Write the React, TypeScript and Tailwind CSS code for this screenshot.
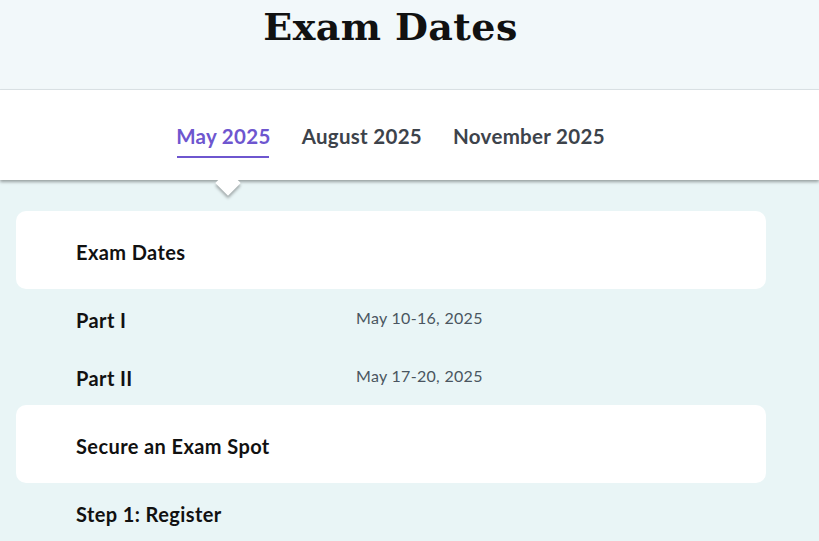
import React from "react";

const body = { fontFamily: "Lato, 'Noto Sans', sans-serif" };

export default function App() {
  return (
    <div className="w-[819px] h-[541px] overflow-hidden bg-[#e9f5f6]" style={body}>
      <div className="h-[90px] bg-[#f2f8fa] border-b border-[#dde4e7] flex justify-center pr-[38px]">
        <h1
          className="text-[38px] font-bold text-[#111] leading-none mt-[8px] tracking-[0.4px]"
          style={{ fontFamily: "'DejaVu Serif', serif" }}
        >
          Exam Dates
        </h1>
      </div>
      <div className="relative h-[90px] bg-white shadow-[0_2px_3px_rgba(0,0,0,0.35)] flex justify-center gap-[31px] pt-[34px] pr-[38px] z-10">
        <div className="flex flex-col items-center">
          <span className="text-[20.5px] font-bold text-[#6e56cf] leading-[24px] tracking-[0.3px]">May 2025</span>
          <div className="w-[92px] h-[2px] bg-[#6e56cf] mt-[8px]" />
        </div>
        <span className="text-[20.5px] font-bold text-[#3d434b] leading-[24px] tracking-[0.3px]">August 2025</span>
        <span className="text-[20.5px] font-bold text-[#3d434b] leading-[24px] tracking-[0.3px]">November 2025</span>
        <div className="absolute left-[219px] top-[84px] w-[18px] h-[18px] bg-white rotate-45 shadow-[2px_2px_3px_rgba(0,0,0,0.3)]" />
        <div className="absolute left-[205px] top-[78px] w-[46px] h-[12px] bg-white" />
      </div>
      <div className="pt-[31px] pl-[16px] w-[766px]">
        <div className="bg-white rounded-[10px] h-[78px] flex items-center pl-[60px]">
          <span className="text-[20px] font-bold text-[#111] tracking-[0.4px] mt-[3px]">Exam Dates</span>
        </div>
        <div className="flex items-center h-[58px] pl-[60px]">
          <span className="w-[280px] text-[20px] font-bold text-[#111] mt-[4px] tracking-[0.4px]">Part I</span>
          <span className="text-[16px] text-[#4a5560] tracking-[0.3px]">May 10-16, 2025</span>
        </div>
        <div className="flex items-center h-[58px] pl-[60px]">
          <span className="w-[280px] text-[20px] font-bold text-[#111] mt-[4px] tracking-[0.4px]">Part II</span>
          <span className="text-[16px] text-[#4a5560] tracking-[0.3px]">May 17-20, 2025</span>
        </div>
        <div className="bg-white rounded-[10px] h-[78px] flex items-center pl-[60px]">
          <span className="text-[20px] font-bold text-[#111] tracking-[0.4px] mt-[3px]">Secure an Exam Spot</span>
        </div>
        <div className="flex items-center h-[62px] pl-[60px]">
          <span className="text-[20px] font-bold text-[#111] tracking-[0.4px]">Step 1: Register</span>
        </div>
      </div>
    </div>
  );
}
